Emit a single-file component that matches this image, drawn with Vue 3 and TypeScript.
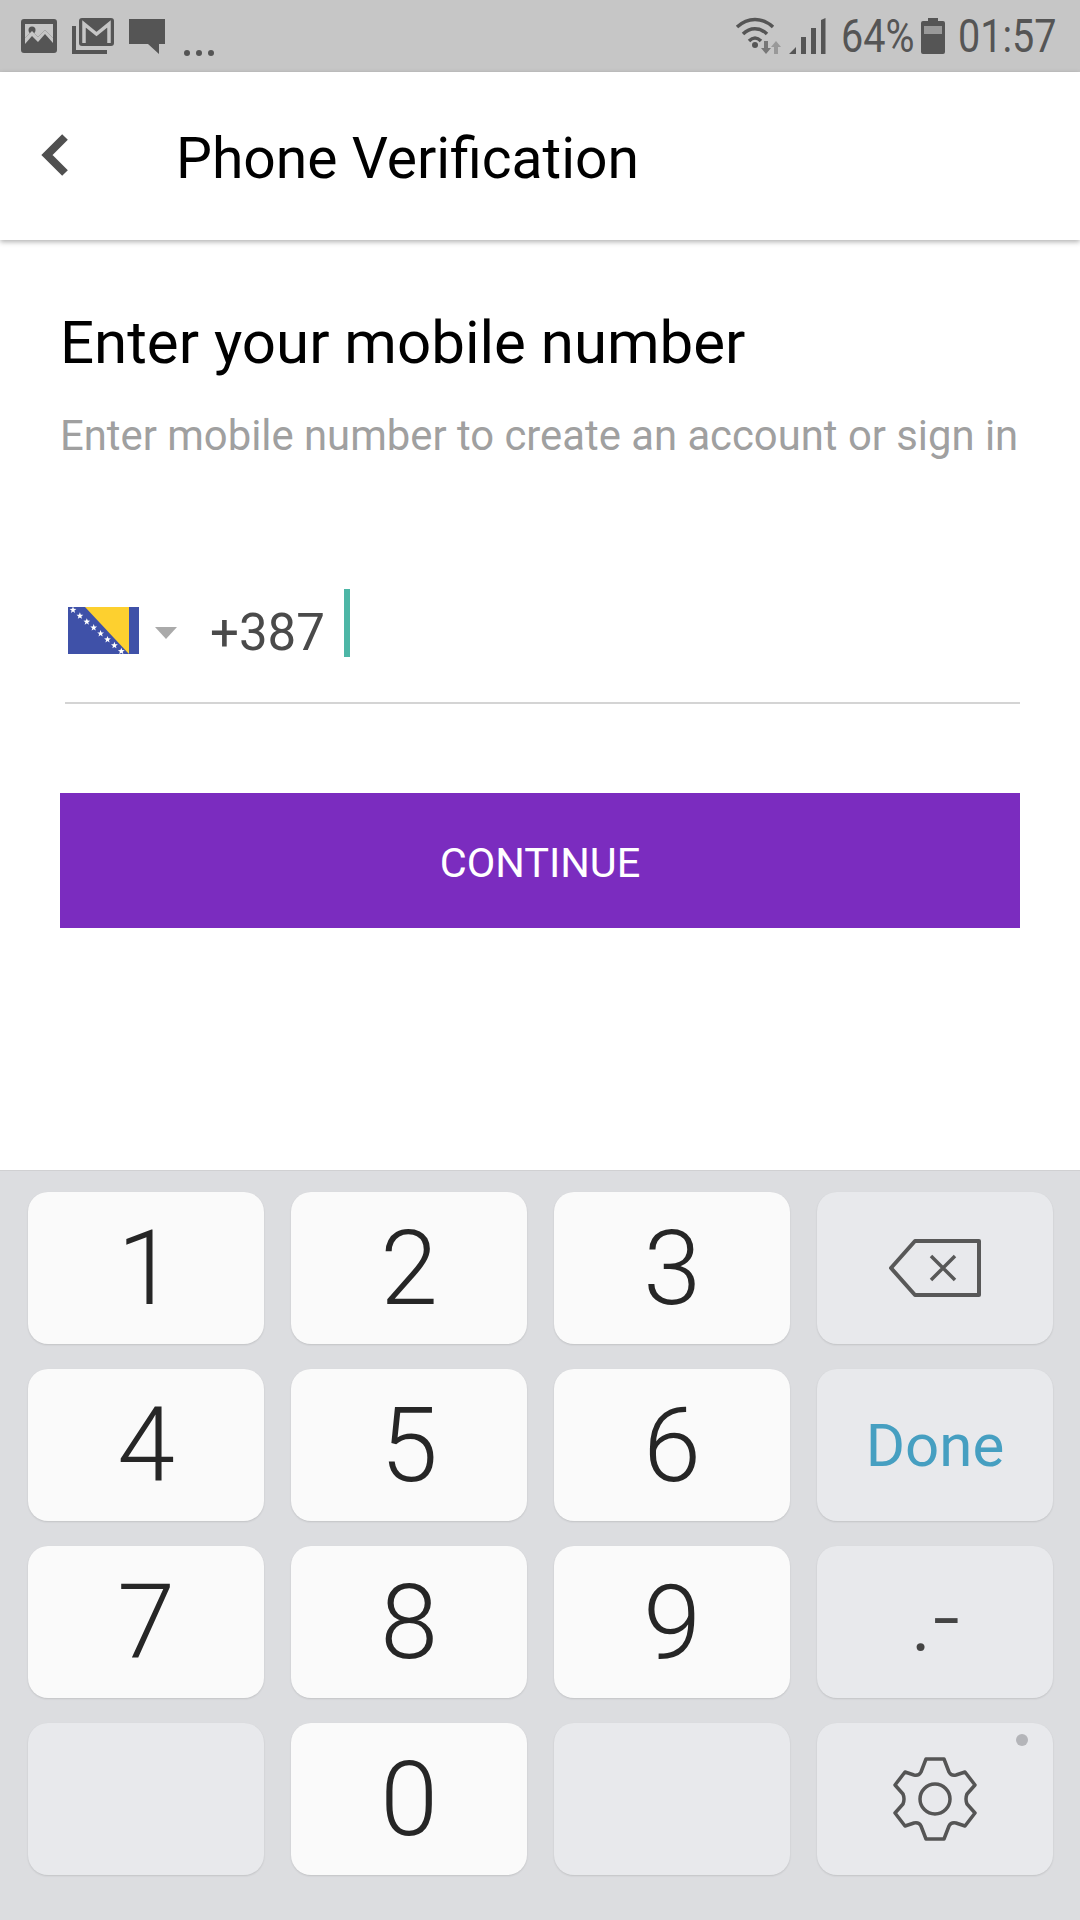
<template>
  <div class="screen">
    <div class="status-bar">
      <div class="status-left">
        <svg class="ic" width="36" height="34" viewBox="0 0 36 34">
          <path fill="#555" fill-rule="evenodd" d="M3 0H33A3 3 0 0 1 36 3V31A3 3 0 0 1 33 34H3A3 3 0 0 1 0 31V3A3 3 0 0 1 3 0ZM4 5V19L11 12L17 18L24 11L32 19V5Z" />
          <circle cx="11" cy="11" r="3.500" fill="#555" />
          <path fill="#c6c6c6" d="M4 25L11 17L17 23L24 15L32 24V19L24 11L17 18L11 12L4 19Z" />
        </svg>
        <svg class="ic mail" width="42" height="36" viewBox="0 0 42 36">
          <path fill="none" stroke="#555" stroke-width="4" d="M2 8V34H35" />
          <rect x="7" y="0" width="35" height="28" rx="3" fill="#555" />
          <path fill="none" stroke="#c6c6c6" stroke-width="3.500" d="M12 25V6L24.500 16L37 6V25" />
        </svg>
        <svg class="ic" width="36" height="35" viewBox="0 0 36 35">
          <path fill="#555" d="M0 0H36V25H30V35L19 25H0Z" />
        </svg>
        <span class="dots"><i></i><i></i><i></i></span>
      </div>
      <div class="status-right">
        <svg class="wifi" width="49" height="38" viewBox="0 0 49 38">
          <path fill="none" stroke="#555" stroke-width="3.500" d="M2 10C13 0 27 0 38 10M8 17C15 10 25 10 32 17M14 24C18 20 22 20 26 24" />
          <circle cx="20" cy="28" r="3" fill="#555" />
          <path fill="#777" d="M29 24h4v7h3l-5 6l-5-6h3Z" />
          <path fill="#999" d="M39 37h4v-7h3l-5-6l-5 6h3Z" />
        </svg>
        <svg class="signal" width="37" height="36" viewBox="0 0 37 36">
          <path fill="#555" d="M0 36L7 29V36ZM12 19H17V36H12ZM22 10H27V36H22ZM32 2L36.500 0V36H32Z" />
        </svg>
        <span class="st-text pct">64%</span>
        <svg class="battery" width="24" height="36" viewBox="0 0 24 36">
          <path fill="#555" d="M7 0H17V3H22A2 2 0 0 1 24 5V34A2 2 0 0 1 22 36H2A2 2 0 0 1 0 34V5A2 2 0 0 1 2 3H7Z" />
          <rect x="3" y="8" width="18" height="8" fill="#999" />
        </svg>
        <span class="st-text clock">01:57</span>
      </div>
    </div>

    <header class="app-bar">
      <svg class="back" width="28" height="42" viewBox="0 0 28 42">
        <path fill="none" stroke="#505050" stroke-width="8" stroke-linejoin="miter" d="M24 3L6 21L24 39" />
      </svg>
      <h1 class="title">Phone Verification</h1>
    </header>

    <main class="content">
      <h2 class="heading">Enter your mobile number</h2>
      <p class="sub">Enter mobile number to create an account or sign in</p>

      <div class="phone-row">
        <svg class="flag" width="71" height="47" viewBox="0 0 71 47">
          <rect width="71" height="47" fill="#3f51a8" />
          <path fill="#fdd02f" d="M17 0H61V47Z" />
          <polygon v-for="p in stars" :key="p" :points="p" fill="#fff" />
        </svg>
        <span class="caret-down"></span>
        <span class="code">+387</span>
        <span class="cursor"></span>
      </div>

      <button class="continue">CONTINUE</button>
    </main>

    <section class="keyboard">
      <div v-for="key in keys" :key="key.id" class="key" :class="{ dark: key.dark }">
        <span v-if="key.label" :class="key.cls ?? 'digit'">{{ key.label }}</span>
        <svg v-else-if="key.id === 'del'" width="92" height="58" viewBox="0 0 92 58">
          <path fill="none" stroke="#585858" stroke-width="4" stroke-linejoin="round" d="M26 2H90V56H26L2 29Z" />
          <path fill="none" stroke="#585858" stroke-width="3.500" d="M42 17L66 41M66 17L42 41" />
        </svg>
        <template v-else-if="key.id === 'gear'">
          <svg width="84" height="84" viewBox="-42 -42 84 84">
            <path fill="none" stroke="#555" stroke-width="3.500" stroke-linejoin="round" d="M-9 -40H9L14 -27Q16 -23 21 -24L30 -27L40 -14L32 -5Q30 0 32 5L40 14L30 27L21 24Q16 23 14 27L9 40H-9L-14 27Q-16 23 -21 24L-30 27L-40 14L-32 5Q-30 0 -32 -5L-40 -14L-30 -27L-21 -24Q-16 -23 -14 -27Z" />
            <circle r="15" fill="none" stroke="#555" stroke-width="3.500" />
          </svg>
          <span class="gear-dot"></span>
        </template>
      </div>
    </section>
  </div>
</template>

<script setup lang="ts">
interface Key {
  id: string
  label?: string
  dark?: boolean
  cls?: string
}

const keys: Key[] = [
  { id: '1', label: '1' },
  { id: '2', label: '2' },
  { id: '3', label: '3' },
  { id: 'del', dark: true },
  { id: '4', label: '4' },
  { id: '5', label: '5' },
  { id: '6', label: '6' },
  { id: 'done', label: 'Done', dark: true, cls: 'done' },
  { id: '7', label: '7' },
  { id: '8', label: '8' },
  { id: '9', label: '9' },
  { id: 'sym', label: '.-', dark: true, cls: 'sym' },
  { id: 'blank1', dark: true },
  { id: '0', label: '0' },
  { id: 'blank2', dark: true },
  { id: 'gear', dark: true }
]

// five pointed stars running down the flag's diagonal
function starPoints(cx: number, cy: number, r: number): string {
  const pts: string[] = []
  for (let i = 0; i < 10; i++) {
    const rad = i % 2 ? r * 0.42 : r
    const a = -Math.PI / 2 + (i * Math.PI) / 5
    pts.push(`${(cx + rad * Math.cos(a)).toFixed(1)},${(cy + rad * Math.sin(a)).toFixed(1)}`)
  }
  return pts.join(' ')
}

const stars = Array.from({ length: 8 }, (_, i) => starPoints(5 + i * 6.9, 3 + i * 5.9, 3.6))
</script>

<style scoped>
.screen {
  width: 1080px;
  height: 1920px;
  display: flex;
  flex-direction: column;
  background: #fff;
  font-family: Roboto, 'Liberation Sans', sans-serif;
  overflow: hidden;
}

.status-bar {
  height: 72px;
  flex: none;
  background: #c6c6c6;
  display: flex;
  justify-content: space-between;
  align-items: center;
  padding: 0 26px 0 21px;
}

.status-left {
  display: flex;
  align-items: center;
  gap: 15px;
}

.ic {
  display: block;
}

.dots {
  display: flex;
  gap: 6px;
  align-self: flex-end;
  margin: 0 0 -2px 4px;
}

.dots i {
  width: 6px;
  height: 6px;
  border-radius: 50%;
  background: #555;
}

.status-right {
  display: flex;
  align-items: center;
}

.signal {
  margin-left: 5px;
}

.st-text {
  font-size: 46px;
  color: #555;
  display: inline-block;
  white-space: nowrap;
  transform: scaleX(0.86);
  transform-origin: left;
}

.pct {
  width: 68px;
  margin-left: 15px;
}

.battery {
  margin-left: 12px;
}

.clock {
  width: 96px;
  margin-left: 13px;
}

.app-bar {
  height: 168px;
  flex: none;
  display: flex;
  align-items: center;
  padding-left: 41px;
  box-shadow: 0 2px 5px rgba(0, 0, 0, 0.3);
  position: relative;
}

.back {
  margin-top: -2px;
}

.title {
  margin: 5px 0 0 107px;
  font-size: 57px;
  font-weight: 400;
  color: #000;
}

.content {
  flex: 1;
  padding: 70px 60px 0;
}

.heading {
  margin: 0;
  font-size: 60px;
  line-height: 66px;
  font-weight: 400;
  color: #000;
}

.sub {
  margin: 36px 0 0;
  font-size: 41.800px;
  line-height: 48px;
  color: #a0a0a0;
  white-space: nowrap;
}

.phone-row {
  margin: 129px 0 0 5px;
  height: 113px;
  border-bottom: 2px solid #d4d4d4;
  display: flex;
  align-items: flex-start;
}

.flag {
  margin: 18px 0 0 3px;
}

.caret-down {
  width: 0;
  height: 0;
  margin: 38px 0 0 16px;
  border-left: 11px solid transparent;
  border-right: 11px solid transparent;
  border-top: 12px solid #aaa;
}

.code {
  margin: 9px 0 0 33px;
  font-size: 51px;
  line-height: 70px;
  color: #4a4a4a;
}

.cursor {
  width: 6px;
  height: 68px;
  margin-left: 19px;
  background: #4db6a6;
}

.continue {
  display: block;
  width: 960px;
  height: 135px;
  margin: 89px 0 0;
  padding: 3px 0 0;
  border: none;
  background: #7b2cbf;
  color: #fff;
  font-family: inherit;
  font-size: 41.500px;
}

.keyboard {
  height: 750px;
  flex: none;
  background: #dcdde0;
  border-top: 1px solid #d0d0d2;
  box-sizing: border-box;
  padding: 21px 27px 0 28px;
  display: grid;
  grid-template-columns: repeat(4, 236px);
  grid-auto-rows: 152px;
  gap: 25px 27px;
  align-content: start;
}

.key {
  position: relative;
  background: #fafafa;
  border-radius: 20px;
  box-shadow: 0 1px 2px rgba(0, 0, 0, 0.12);
  display: flex;
  align-items: center;
  justify-content: center;
}

.key.dark {
  background: #e8e9ec;
}

.digit {
  font-size: 104px;
  font-weight: 300;
  color: #262626;
  margin-top: 1px;
}

.done {
  font-size: 60px;
  color: #469fc1;
  margin-top: 1px;
}

.sym {
  font-size: 96px;
  font-weight: 300;
  color: #444;
  margin-top: -8px;
}

.gear-dot {
  position: absolute;
  top: 11px;
  right: 25px;
  width: 12px;
  height: 12px;
  border-radius: 50%;
  background: #b4b5b9;
}
</style>

<style>
html,
body {
  margin: 0;
  background: #fff;
}
</style>
